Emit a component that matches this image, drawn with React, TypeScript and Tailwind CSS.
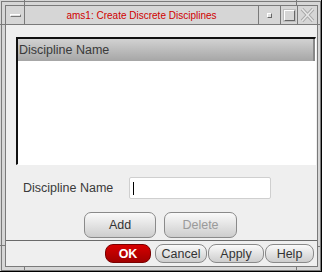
export default function App() {
  const tick = 'absolute bg-[#7a7a7a]';
  return (
    <div className="relative w-[322px] h-[272px] box-border bg-[#d6d6d6] border-r border-b border-black pt-px pl-px font-['Liberation_Sans',Arial,sans-serif] text-[#333]">
      {/* frame corner handles */}
      <span className={`${tick} left-[24px] top-0 w-px h-[5px]`} />
      <span className={`${tick} left-[296px] top-0 w-px h-[5px]`} />
      <span className={`${tick} left-0 top-[24px] w-[5px] h-px`} />
      <span className={`${tick} left-0 top-[245px] w-[5px] h-px`} />
      <span className={`${tick} left-[317px] top-[24px] w-[4px] h-px`} />
      <span className={`${tick} left-[317px] top-[246px] w-[4px] h-px`} />
      <span className={`${tick} left-[24px] top-[266px] w-px h-[5px]`} />
      <span className={`${tick} left-[296px] top-[266px] w-px h-[5px]`} />

      <div className="h-full box-border border border-[#7a7a7a] pt-[3px] pl-[3px] pr-[2px] pb-[3px]">
        <div className="h-full box-border border border-[#7a7a7a] flex flex-col">
          {/* title bar */}
          <div className="h-[19px] flex border-b border-[#7a7a7a] bg-[#d6d6d6]">
            <div className="w-[19px] border-r border-[#7a7a7a] flex items-center justify-center">
              <div className="w-[11px] h-[3px] bg-[#e0e0e0] border-t border-l border-white border-b border-r border-b-[#777] border-r-[#777]" />
            </div>
            <div className="flex-1 flex items-center justify-center text-[10px] text-[#d00000]">
              ams1: Create Discrete Disciplines
            </div>
            <div className="w-[22px] border-l border-[#7a7a7a] flex items-center justify-center">
              <div className="w-[5px] h-[5px] bg-[#e0e0e0] border-t border-l border-white border-b border-r border-b-[#666] border-r-[#666]" />
            </div>
            <div className="w-[17px] border-l border-[#7a7a7a] flex items-center justify-center">
              <div className="w-[11px] h-[11px] border-t border-l border-white border-b border-r border-b-[#666] border-r-[#666] outline outline-1 outline-[#bdbdbd]" />
            </div>
            <div className="w-[20px] border-l border-[#7a7a7a] flex items-center justify-center">
              <svg width="15" height="14" viewBox="0 0 15 14">
                <path d="M2 1 L13 13 M13 1 L2 13" stroke="#a8a8a8" strokeWidth="3.4" />
                <path d="M2 1 L13 13 M13 1 L2 13" stroke="#e6e6e6" strokeWidth="1.6" />
              </svg>
            </div>
          </div>

          {/* client area */}
          <div className="flex-1 bg-[#efefef] flex flex-col">
            <div className="mt-[12px] ml-[10px] mr-px h-[128px] box-border border-t-2 border-l-2 border-t-[#111] border-l-[#111] border-b border-r border-b-white border-r-white bg-white flex flex-col">
              <div className="h-[22px] flex items-center bg-gradient-to-b from-[#d2d2d2] to-[#a6a6a6] border-r-2 border-[#888]">
                <span className="pl-px text-[12.5px] text-[#3a3a3a]">Discipline Name</span>
              </div>
            </div>

            <div className="mt-[12px] flex items-center h-[22px]">
              <span className="ml-[17px] w-[106px] text-[12.5px] text-[#3a3a3a]">Discipline Name</span>
              <div className="w-[142px] h-[22px] box-border bg-white border border-[#cfcfcf] rounded-[2px] flex items-center pl-[3px]">
                <div className="w-px h-[13px] bg-black" />
              </div>
            </div>

            <div className="mt-[13px] flex justify-center gap-[8px] pr-[2px]">
              <button className="w-[72px] h-[26px] rounded-[7px] border border-[#8a8a8a] bg-gradient-to-b from-[#fafafa] to-[#cdcdcd] text-[12.5px] text-[#333]">
                Add
              </button>
              <button className="w-[73px] h-[26px] rounded-[7px] border border-[#8a8a8a] bg-gradient-to-b from-[#fafafa] to-[#cdcdcd] text-[12.5px] text-[#9a9a9a]">
                Delete
              </button>
            </div>

            <div className="mt-[2px] h-px bg-[#6a6a6a]" />

            <div className="flex-1 flex items-center justify-end pr-[3px] gap-px">
              <button className="mr-[3px] w-[46px] h-[19px] rounded-[8px] border border-[#7a0000] bg-gradient-to-b from-[#d80000] to-[#a00000] text-[12.5px] font-bold text-white">
                OK
              </button>
              <button className="w-[52px] h-[19px] rounded-[8px] border border-[#8a8a8a] bg-gradient-to-b from-[#fafafa] to-[#cdcdcd] text-[12.5px] text-[#333]">
                Cancel
              </button>
              <button className="w-[56px] h-[19px] rounded-[8px] border border-[#8a8a8a] bg-gradient-to-b from-[#fafafa] to-[#cdcdcd] text-[12.5px] text-[#333]">
                Apply
              </button>
              <button className="w-[49px] h-[19px] rounded-[8px] border border-[#8a8a8a] bg-gradient-to-b from-[#fafafa] to-[#cdcdcd] text-[12.5px] text-[#333]">
                Help
              </button>
            </div>
          </div>
        </div>
      </div>
    </div>
  );
}
